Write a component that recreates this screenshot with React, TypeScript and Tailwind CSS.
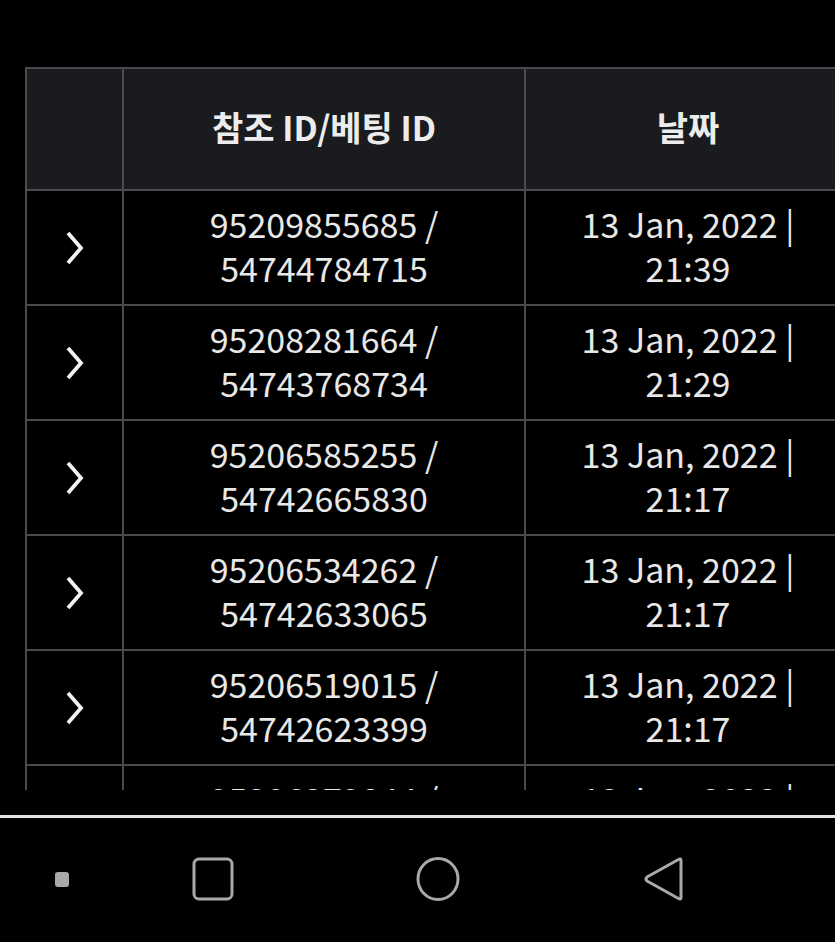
import React from "react";

const rows = [
  ["95209855685 /", "54744784715", "13 Jan, 2022 |", "21:39"],
  ["95208281664 /", "54743768734", "13 Jan, 2022 |", "21:29"],
  ["95206585255 /", "54742665830", "13 Jan, 2022 |", "21:17"],
  ["95206534262 /", "54742633065", "13 Jan, 2022 |", "21:17"],
  ["95206519015 /", "54742623399", "13 Jan, 2022 |", "21:17"],
  ["95206379844 /", "54742541021", "13 Jan, 2022 |", "21:09"],
];

const Chevron = () => (
  <svg width="22" height="36" viewBox="0 0 22 36" fill="none">
    <path d="M4 3 L17 18 L4 33" stroke="#f2f2f2" strokeWidth="3.8" strokeLinecap="butt" strokeLinejoin="miter" />
  </svg>
);

export default function App() {
  return (
    <div
      className="w-[835px] h-[942px] bg-black overflow-hidden flex flex-col"
      style={{ fontFamily: '"Noto Sans CJK KR", "Noto Sans", sans-serif' }}
    >
      <div className="h-[790px] overflow-hidden pt-[67px] pl-[25px] shrink-0">
        <div className="grid grid-cols-[97px_402px_326px] w-[827px] border-l-2 border-t-2 border-[#4a4b4f]">
          <div className="h-[122px] bg-[#1a1b1e] border-r-2 border-b-2 border-[#4a4b4f]" />
          <div className="h-[122px] bg-[#1a1b1e] border-r-2 border-b-2 border-[#4a4b4f] flex items-center justify-center pb-[5px] text-[34px] font-bold text-[#ececec]">
            참조 ID/베팅 ID
          </div>
          <div className="h-[122px] bg-[#1a1b1e] border-r-2 border-b-2 border-[#4a4b4f] flex items-center justify-center pb-[5px] text-[34px] font-bold text-[#ececec]">
            날짜
          </div>
          {rows.map((r, i) => (
            <React.Fragment key={i}>
              <div className="h-[115px] border-r-2 border-b-2 border-[#4a4b4f] flex items-center justify-center pl-[1px]">
                <Chevron />
              </div>
              <div className="h-[115px] border-r-2 border-b-2 border-[#4a4b4f] flex flex-col items-center justify-center pb-[4px] text-[34px] leading-[44px] font-normal text-[#e8e8e8]">
                <div>{r[0]}</div>
                <div>{r[1]}</div>
              </div>
              <div className="h-[115px] border-r-2 border-b-2 border-[#4a4b4f] flex flex-col items-center justify-center pb-[4px] text-[34px] leading-[44px] font-normal text-[#e8e8e8]">
                <div>{r[2]}</div>
                <div>{r[3]}</div>
              </div>
            </React.Fragment>
          ))}
        </div>
      </div>
      <div className="h-[25px] shrink-0" />
      <div className="h-[3px] bg-[#e4e4e4] shrink-0" />
      <div className="flex-1 flex items-center pb-[2px]">
        <div className="ml-[55px] w-[14px] h-[15px] rounded-[3px] bg-[#a9a9a9]" />
        <svg className="ml-[122px]" width="44" height="46" viewBox="0 0 44 46" fill="none">
          <rect x="3" y="3" width="38" height="40" rx="5" stroke="#a9a9a9" strokeWidth="3" />
        </svg>
        <svg className="ml-[180px]" width="46" height="46" viewBox="0 0 46 46" fill="none">
          <ellipse cx="23" cy="23" rx="20" ry="20.5" stroke="#a9a9a9" strokeWidth="3" />
        </svg>
        <svg className="ml-[181px]" width="44" height="46" viewBox="0 0 44 46" fill="none">
          <path d="M39 4.5 Q39 2 36.5 3.5 L5 21 Q3 23 5 25 L36.5 42.5 Q39 44 39 41.5 Z" stroke="#a9a9a9" strokeWidth="3" strokeLinejoin="round" />
        </svg>
      </div>
    </div>
  );
}
